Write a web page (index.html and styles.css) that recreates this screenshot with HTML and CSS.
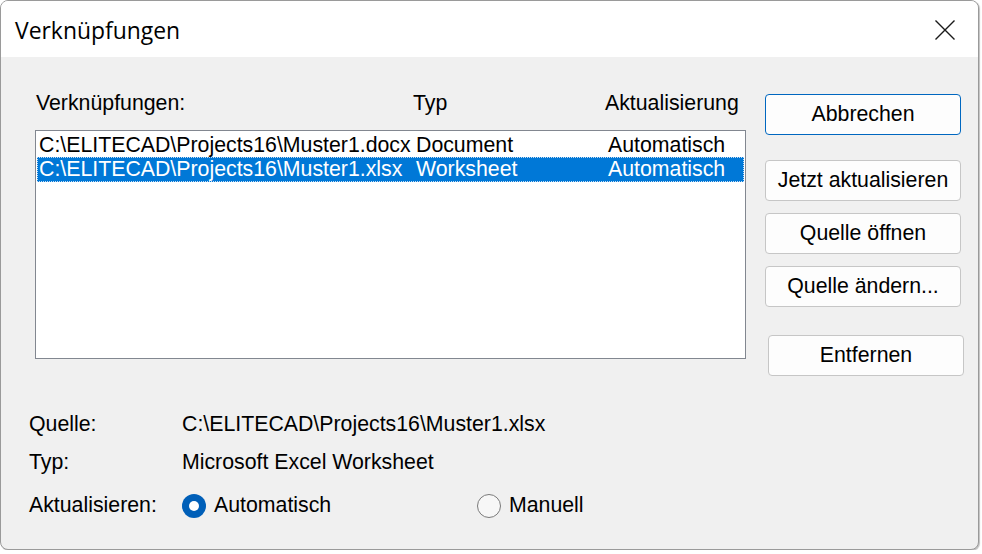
FILE: index.html
```html
<!DOCTYPE html>
<html lang="de">
<head>
<meta charset="utf-8">
<title>Verknüpfungen</title>
<link rel="stylesheet" href="styles.css">
</head>
<body>
<div class="window">
  <div class="titlebar">
    <span class="title">Verknüpfungen</span>
    <span class="close">
      <svg width="22" height="22" viewBox="0 0 22 22"><path d="M1.5 1.5 L20.5 20.5 M20.5 1.5 L1.5 20.5" stroke="#1a1a1a" stroke-width="1.4" fill="none"/></svg>
    </span>
  </div>
  <div class="body">
    <div class="top">
      <div class="links">
        <div class="heads">
          <span>Verknüpfungen:</span><span>Typ</span><span>Aktualisierung</span>
        </div>
        <div class="listbox">
          <div class="row"><span>C:\ELITECAD\Projects16\Muster1.docx</span><span>Document</span><span>Automatisch</span></div>
          <div class="row sel"><span>C:\ELITECAD\Projects16\Muster1.xlsx</span><span>Worksheet</span><span>Automatisch</span></div>
        </div>
      </div>
      <div class="buttons">
        <button class="btn default">Abbrechen</button>
        <button class="btn b2">Jetzt aktualisieren</button>
        <button class="btn b3">Quelle öffnen</button>
        <button class="btn b3">Quelle ändern...</button>
        <button class="btn b5">Entfernen</button>
      </div>
    </div>
    <div class="info">
      <span class="lbl">Quelle:</span><span class="val">C:\ELITECAD\Projects16\Muster1.xlsx</span>
      <span class="lbl">Typ:</span><span class="val">Microsoft Excel Worksheet</span>
      <span class="lbl">Aktualisieren:</span>
      <div class="radios">
        <label class="radio r1"><span class="dot on"></span>Automatisch</label>
        <label class="radio"><span class="dot"></span>Manuell</label>
      </div>
    </div>
  </div>
</div>
</body>
</html>
```
FILE: styles.css
```css
html, body {
  margin: 0;
  padding: 0;
  background: #ffffff;
}
body {
  font-family: "Liberation Sans", Arial, sans-serif;
  font-size: 21.3px;
  color: #000;
}
.window {
  width: 979px;
  height: 550px;
  border: 1px solid #9a9a9a;
  border-radius: 8px;
  overflow: hidden;
  background: #f0f0f0;
  box-sizing: border-box;
  display: flex;
  flex-direction: column;
  box-shadow: 1px 1px 1px rgba(0,0,0,0.25);
}
.titlebar {
  height: 56px;
  background: #ffffff;
  display: flex;
  align-items: center;
  justify-content: space-between;
  padding: 0 22px 0 14px;
  flex: none;
}
.title {
  font-family: "Open Sans", "Noto Sans", sans-serif;
  font-size: 22.9px;
  margin-top: 3px;
}
.close {
  display: flex;
  margin-top: 2px;
}
.body {
  flex: 1;
  display: flex;
  flex-direction: column;
}
.top {
  display: flex;
  padding-top: 34px;
}
.links {
  margin-left: 34px;
  width: 711px;
}
.heads {
  display: grid;
  grid-template-columns: 377px 192px 1fr;
  height: 24px;
  line-height: 24px;
  padding-left: 1px;
  white-space: nowrap;
}
.listbox {
  margin-top: 15px;
  height: 229px;
  box-sizing: border-box;
  border: 1px solid #828790;
  background: #fff;
  padding: 2px 1px;
}
.row {
  display: grid;
  grid-template-columns: 377px 192px 1fr;
  height: 24px;
  line-height: 24px;
  padding-left: 2px;
  white-space: nowrap;
}
.row.sel {
  background: #0078d7;
  color: #fff;
  height: 25px;
  outline: 1px dotted #c8dff5;
  outline-offset: -1px;
}
.buttons {
  margin-left: 19px;
  padding-top: 3px;
  display: flex;
  flex-direction: column;
  width: 199px;
}
.btn {
  font-family: "Liberation Sans", Arial, sans-serif;
  font-size: 21.3px;
  color: #000;
  width: 196px;
  height: 41px;
  background: #fdfdfd;
  border: 1px solid #c6c6c6;
  border-radius: 4px;
  padding: 0;
  margin: 0;
  white-space: nowrap;
}
.btn.default {
  border-color: #0067c0;
}
.b2 { margin-top: 25px; }
.b3 { margin-top: 12px; }
.b5 { margin-top: 28px; margin-left: 3px; }
.info {
  margin-top: 29px;
  padding-left: 28px;
  display: grid;
  grid-template-columns: 153px 1fr;
  grid-auto-rows: 38px;
  align-items: center;
}
.info .lbl:last-of-type, .radios {
  margin-top: 11px;
}
.radios {
  display: flex;
  align-items: center;
}
.radio {
  display: flex;
  align-items: center;
  gap: 8px;
}
.r1 { width: 295px; }
.dot {
  width: 24px;
  height: 24px;
  box-sizing: border-box;
  border-radius: 50%;
  border: 1px solid #7a7a7a;
  background: #f7f7f7;
  display: inline-block;
  position: relative;
}
.dot.on {
  border: none;
  background: #005fb8;
}
.dot.on::after {
  content: "";
  position: absolute;
  left: 7px;
  top: 7px;
  width: 10px;
  height: 10px;
  border-radius: 50%;
  background: #fff;
}
```
